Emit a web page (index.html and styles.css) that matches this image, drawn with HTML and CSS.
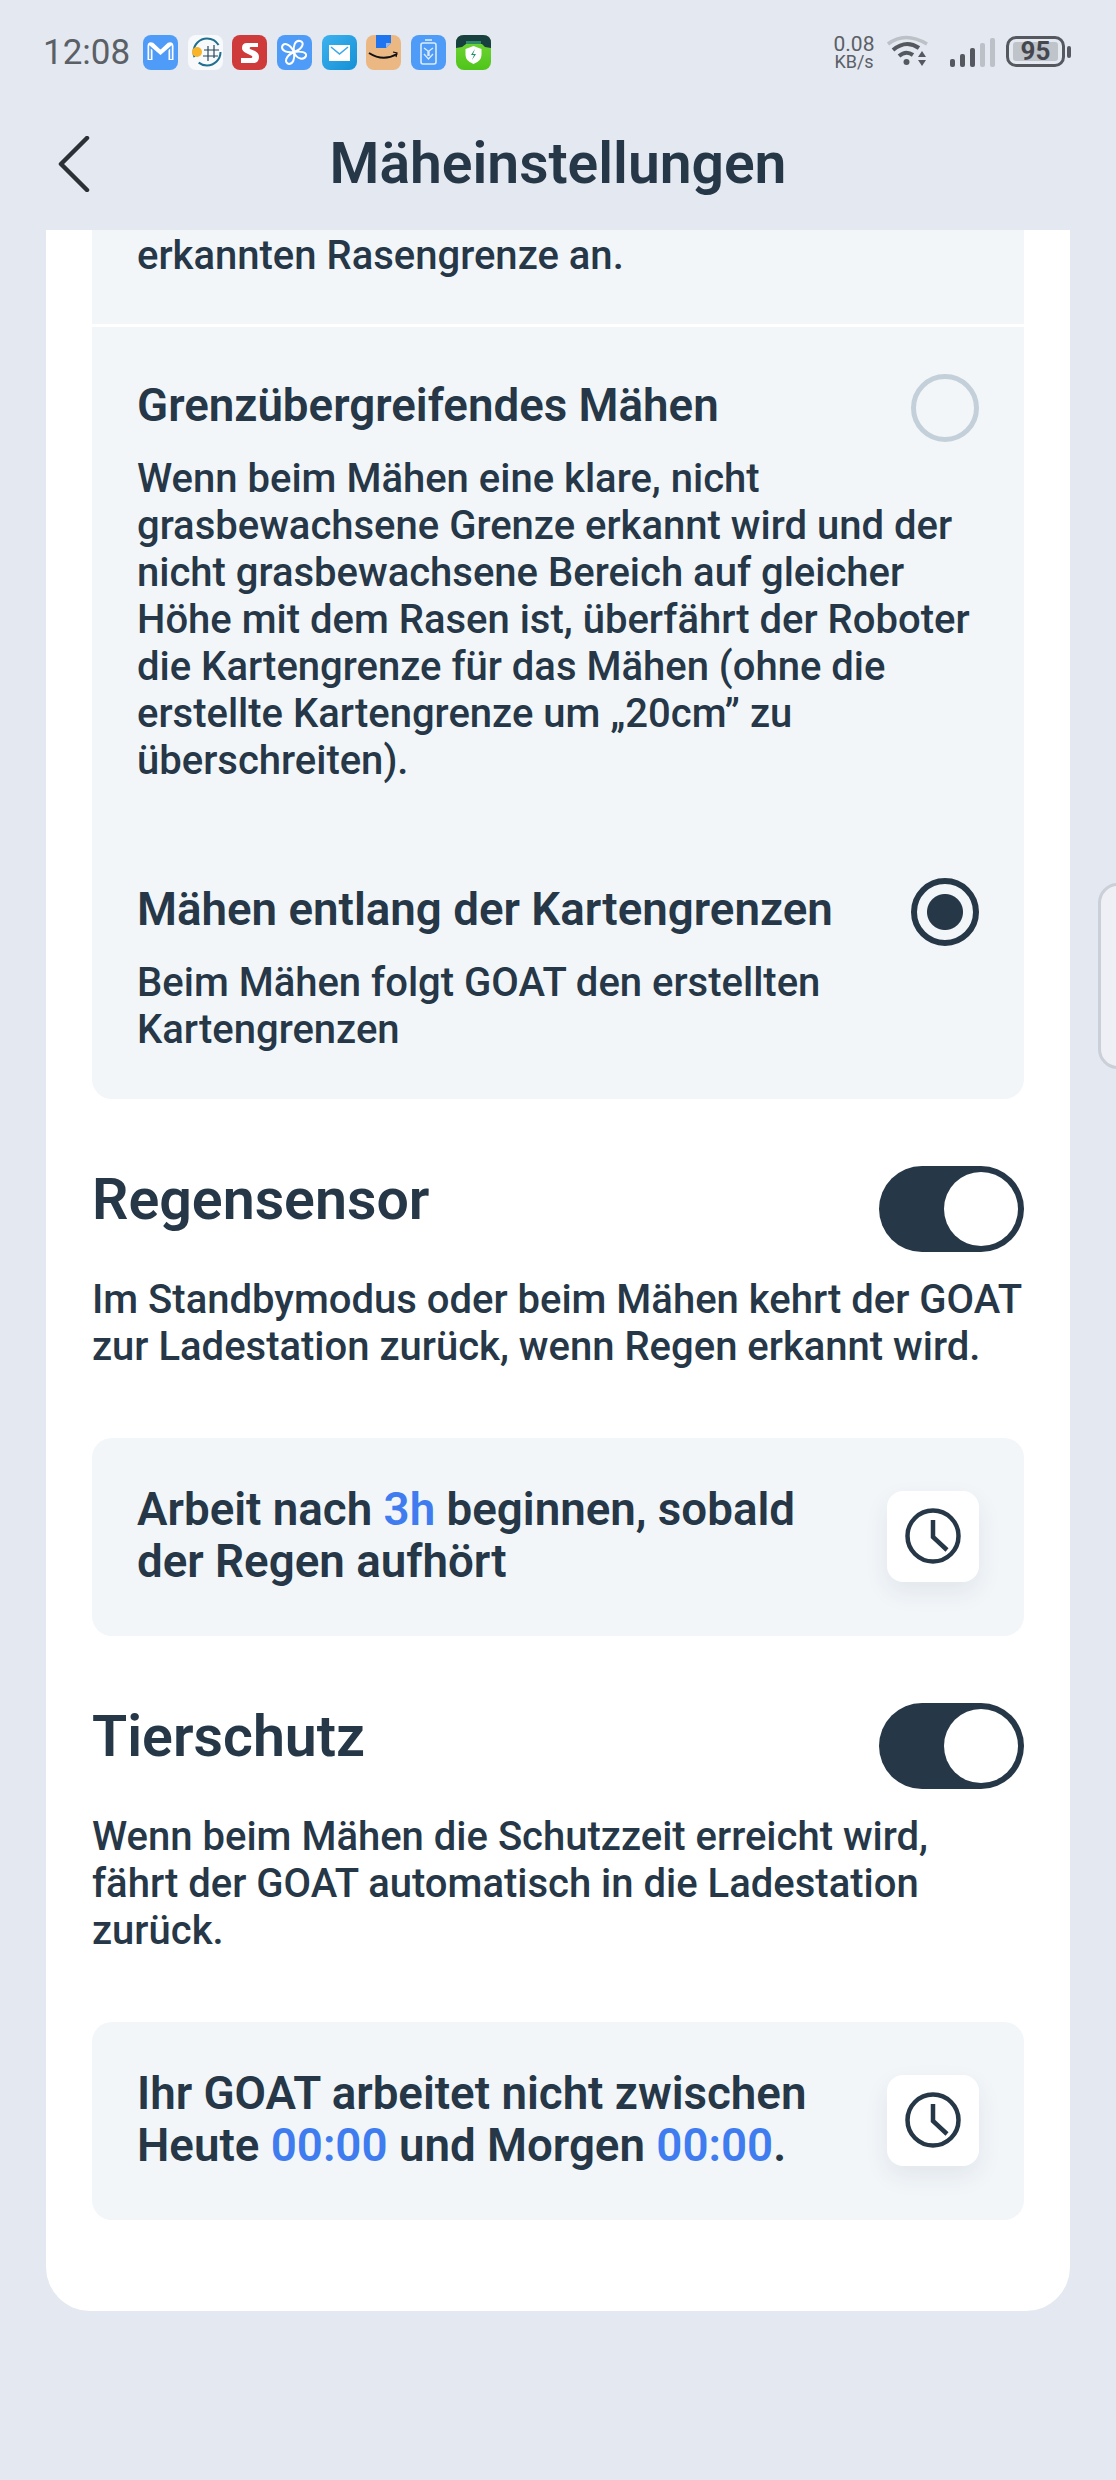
FILE: index.html
```html
<!DOCTYPE html>
<html lang="de">

<head>
    <meta charset="utf-8">
    <title>Mäheinstellungen</title>
    <link rel="stylesheet" href="styles.css">
</head>

<body>
    <div class="statusBar">
        <span class="time">12:08</span>
        <div class="appIcons">
            <svg viewBox="0 0 35 35"><rect width="35" height="35" rx="8" fill="#4e9bf8"/><path d="M7 25V11q0-2 2-1l8.500 8 8.500-8q2-1 2 1v14" fill="none" stroke="#fff" stroke-width="5" stroke-linejoin="round"/><path d="M7 24V12l10.500 9 10.500-9v12" fill="none" stroke="#4e9bf8" stroke-width="1.600"/></svg>
            <svg viewBox="0 0 35 35"><rect width="35" height="35" rx="8" fill="#f7f9fb"/><circle cx="19" cy="17" r="13.500" fill="none" stroke="#1f6f8f" stroke-width="2" stroke-dasharray="30 7 40 8"/><circle cx="9" cy="17" r="5" fill="#f8b52a"/><path d="M20 11v15M26 10v13M16 15h15M15 21h15" stroke="#28475a" stroke-width="1.200"/></svg>
            <svg viewBox="0 0 35 35"><rect width="35" height="35" rx="8" fill="#cf3a3a"/><path d="M26 8H15q-5 0-5 5 0 3 4 5l6 3q1 2-1 2H9v5h12q6 0 6-6 0-4-4-6l-5-2q-1-2 1-2h7z" fill="#fff"/></svg>
            <svg viewBox="0 0 35 35"><rect width="35" height="35" rx="8" fill="#4e9bf8"/><path d="M17 17C10 18 5 16 5 12c1-4 7-5 12 5zM17 17c-1-6 1-12 6-11 5 1 3 8-6 11zM17 17c7-1 13 0 12 4-2 4-9 4-12-4zM17 17c1 7-1 12-5 12-5-1-4-8 5-12z" fill="none" stroke="#fff" stroke-width="2"/></svg>
            <svg viewBox="0 0 35 35"><defs><linearGradient id="mailBg" x1="0" y1="0" x2="1" y2="1"><stop offset="0" stop-color="#3db2ee"/><stop offset="1" stop-color="#1590d6"/></linearGradient></defs><rect width="35" height="35" rx="8" fill="url(#mailBg)"/><rect x="7" y="10" width="21" height="16" fill="#fff"/><path d="M9 12l8.500 7 8.500-7" fill="none" stroke="#3aa9e6" stroke-width="1.600"/></svg>
            <svg viewBox="0 0 35 35"><rect width="35" height="35" rx="8" fill="#ebb884"/><path d="M10 0h15v8l-5 5H10z" fill="#1f74f0"/><path d="M20 8h5l-5 5z" fill="#8fb8f5"/><path d="M3 18q14 9 28 1" fill="none" stroke="#111" stroke-width="2"/><path d="M27 17l4 1-1 4" fill="none" stroke="#111" stroke-width="1.200"/></svg>
            <svg viewBox="0 0 35 35"><rect width="35" height="35" rx="8" fill="#4e9bf8"/><rect x="10" y="8" width="15" height="21" rx="2" fill="none" stroke="#d9ebff" stroke-width="1.600"/><path d="M14 5h7" stroke="#d9ebff" stroke-width="1.600"/><path d="M13 13l4 3v5M22 13l-4 3v5M13 19l4.500 5 4.500-5" fill="none" stroke="#d9ebff" stroke-width="1.400"/></svg>
            <svg viewBox="0 0 35 35"><defs><linearGradient id="greenBg" x1="0" y1="0" x2="0" y2="1"><stop offset="0" stop-color="#76d83a"/><stop offset="1" stop-color="#4fc41a"/></linearGradient></defs><rect width="35" height="35" rx="8" fill="url(#greenBg)"/><path d="M0 13V8q0-8 8-8h19q8 0 8 8v5l-6-1-3-3H10l-4 3z" fill="#17403f"/><path d="M10 6h15v3H10z" fill="#2f8a65"/><path d="M17.500 11l8 3v6q0 6-8 9-8-3-8-9v-6z" fill="#fff"/><path d="M19 14l-4 6h3l-2 5 4-6h-3z" fill="#1f8f6a"/></svg>
        </div>
        <div class="netSpeed">0.08<small>KB/s</small></div>
        <svg class="wifi" viewBox="0 0 43 33"><path d="M2 10Q19-3 41 10" fill="none" stroke="#bcc0c7" stroke-width="3.500"/><path d="M7 16Q20 5 33 14" fill="none" stroke="#55595f" stroke-width="4"/><path d="M13 22q7-6 14-1" fill="none" stroke="#55595f" stroke-width="4"/><circle cx="20.500" cy="28" r="3" fill="#55595f"/><path d="M32 23l4-6 4 6z" fill="#55595f"/><path d="M32 26l4 6 4-6z" fill="#55595f"/></svg>
        <div class="signal">
            <i class="barOn barA"></i><i class="barOn barB"></i><i class="barOn barC"></i><i class="barOff barD"></i><i class="barOff barE"></i>
        </div>
        <div class="battery"><span class="batteryFill">95</span></div>
        <i class="batteryNub"></i>
    </div>

    <div class="header">
        <svg class="back" viewBox="0 0 32 56"><path d="M29 2L3 28l26 26" fill="none" stroke="#2b3036" stroke-width="4.500" stroke-linecap="round" stroke-linejoin="round"/></svg>
        <h1>Mäheinstellungen</h1>
    </div>

    <div class="card">
        <div class="optionsPanel">
            <div class="optionCut">
                <p class="bodyText">erkannten Rasengrenze an.</p>
            </div>
            <div class="option">
                <div class="optionHead">
                    <h3>Grenzübergreifendes Mähen</h3>
                    <i class="radio"></i>
                </div>
                <p class="bodyText">Wenn beim Mähen eine klare, nicht grasbewachsene Grenze erkannt wird und der nicht grasbewachsene Bereich auf gleicher Höhe mit dem Rasen ist, überfährt der Roboter die Kartengrenze für das Mähen (ohne die erstellte Kartengrenze um „20cm” zu überschreiten).</p>
            </div>
            <div class="option optionLast">
                <div class="optionHead">
                    <h3>Mähen entlang der Kartengrenzen</h3>
                    <i class="radio radioOn"></i>
                </div>
                <p class="bodyText">Beim Mähen folgt GOAT den erstellten Kartengrenzen</p>
            </div>
        </div>

        <div class="sectionHead">
            <h2>Regensensor</h2>
            <div class="toggle"><i></i></div>
        </div>
        <p class="bodyText">Im Standbymodus oder beim Mähen kehrt der GOAT zur Ladestation zurück, wenn Regen erkannt wird.</p>
        <div class="timePanel">
            <p>Arbeit nach <span class="blue">3h</span> beginnen, sobald der Regen aufhört</p>
            <div class="clockTile">
                <svg viewBox="0 0 56 56"><circle cx="28" cy="28" r="25.500" fill="none" stroke="#263747" stroke-width="4.500"/><path d="M28 12v17l14 13" fill="none" stroke="#263747" stroke-width="4.500"/></svg>
            </div>
        </div>

        <div class="sectionHead">
            <h2>Tierschutz</h2>
            <div class="toggle"><i></i></div>
        </div>
        <p class="bodyText">Wenn beim Mähen die Schutzzeit erreicht wird, fährt der GOAT automatisch in die Ladestation zurück.</p>
        <div class="timePanel">
            <p>Ihr GOAT arbeitet nicht zwischen Heute <span class="blue">00:00</span> und Morgen <span class="blue">00:00</span>.</p>
            <div class="clockTile">
                <svg viewBox="0 0 56 56"><circle cx="28" cy="28" r="25.500" fill="none" stroke="#263747" stroke-width="4.500"/><path d="M28 12v17l14 13" fill="none" stroke="#263747" stroke-width="4.500"/></svg>
            </div>
        </div>
    </div>

    <div class="sideHandle"></div>
</body>

</html>
```

FILE: styles.css
```css
html,
body {
    margin: 0;
    height: 2480px;
    overflow: hidden;
}

body {
    position: relative;
    background: #e4e8f1;
    color: #263747;
    font-family: Roboto, "Liberation Sans", sans-serif;
}

h1,
h2,
h3,
p {
    margin: 0;
}

/* status bar */
.statusBar {
    display: flex;
    align-items: center;
    height: 104px;
    padding-left: 43px;
    color: #5b5f66;
}

.time {
    font-size: 35px;
    width: 100px;
}

.appIcons {
    display: flex;
    gap: 9.700px;
    width: 689px;
}

.appIcons svg {
    width: 35px;
    height: 35px;
}

.netSpeed {
    box-sizing: border-box;
    width: 54px;
    padding-right: 10px;
    font-size: 21px;
    line-height: 19px;
    text-align: center;
}

.netSpeed small {
    display: block;
    font-size: 18px;
    line-height: 15px;
}

.wifi {
    width: 43px;
    height: 33px;
    margin-top: -4px;
}

.signal {
    display: flex;
    align-items: flex-end;
    gap: 5px;
    height: 30px;
    margin-left: 21px;
    margin-top: -1px;
}

.signal i {
    width: 5px;
    border-radius: 2px;
}

.barOn {
    background: #55595f;
}

.barOff {
    background: #bcc0c7;
}

.barA { height: 8px; }
.barB { height: 13px; }
.barC { height: 19px; }
.barD { height: 24px; }
.barE { height: 29px; }

.battery {
    box-sizing: border-box;
    width: 59px;
    height: 31px;
    margin-left: 11px;
    margin-top: -1px;
    padding: 3px 4px;
    border: 3px solid #55595f;
    border-radius: 10px;
}

.batteryFill {
    display: block;
    height: 100%;
    background: #bfc3ca;
    border-radius: 3px;
    color: #44484e;
    font-size: 26px;
    font-weight: 700;
    line-height: 19px;
    text-align: center;
}

.batteryNub {
    width: 4px;
    height: 12px;
    margin-left: 2px;
    margin-top: -1px;
    background: #55595f;
    border-radius: 2px;
}

/* header */
.header {
    position: relative;
    display: flex;
    justify-content: center;
    align-items: center;
    height: 118px;
    margin-bottom: 8px;
}

.header h1 {
    padding-top: 2px;
    font-size: 57px;
    font-weight: 600;
    line-height: 116px;
}

.back {
    position: absolute;
    left: 58px;
    top: 32px;
    width: 32px;
    height: 56px;
}

/* white card */
.card {
    margin: 0 46px;
    padding: 0 46px 91px;
    background: #fff;
    border-radius: 0 0 44px 44px;
}

.bodyText {
    font-size: 40px;
    font-weight: 500;
    line-height: 47px;
}

.optionsPanel {
    background: #f2f6f9;
    border-radius: 0 0 20px 20px;
}

.optionCut {
    padding: 2px 45px 45px;
    border-bottom: 3px solid #fff;
}

.option {
    padding: 47px 45px 0;
}

.optionLast {
    padding-top: 94px;
    padding-bottom: 46px;
}

.optionHead {
    display: flex;
    justify-content: space-between;
    align-items: center;
    height: 68px;
    margin-bottom: 13px;
}

.optionHead h3 {
    padding-bottom: 4px;
    font-size: 45.700px;
    font-weight: 600;
    line-height: 56px;
}

.radio {
    box-sizing: border-box;
    flex: none;
    width: 68px;
    height: 68px;
    border: 5px solid #c3d0d9;
    border-radius: 50%;
}

.radioOn {
    border: 6px solid #263747;
    background: radial-gradient(circle, #263747 0 17.500px, transparent 18.500px);
}

.sectionHead {
    display: flex;
    justify-content: space-between;
    height: 86px;
    margin-top: 67px;
    margin-bottom: 24px;
}

.sectionHead h2 {
    font-size: 57.300px;
    font-weight: 600;
    line-height: 68px;
}

.toggle {
    display: flex;
    justify-content: flex-end;
    align-items: center;
    box-sizing: border-box;
    width: 145px;
    height: 86px;
    padding-right: 6px;
    background: #263747;
    border-radius: 43px;
}

.toggle i {
    width: 74px;
    height: 74px;
    background: #fff;
    border-radius: 50%;
}

.timePanel {
    display: flex;
    justify-content: space-between;
    align-items: center;
    margin-top: 68px;
    padding: 46px 45px 48px 45px;
    background: #f2f6f9;
    border-radius: 20px;
}

.timePanel p {
    width: 700px;
    font-size: 45.700px;
    font-weight: 600;
    line-height: 52px;
}

.blue {
    color: #3f7cf0;
}

.clockTile {
    display: flex;
    justify-content: center;
    align-items: center;
    flex: none;
    width: 92px;
    height: 91px;
    background: #fff;
    border-radius: 16px;
    box-shadow: 0 10px 24px rgba(38, 55, 71, 0.08);
}

.clockTile svg {
    width: 56px;
    height: 56px;
}

/* floating tab on the right edge */
.sideHandle {
    position: absolute;
    left: 1098px;
    top: 883px;
    width: 40px;
    height: 186px;
    box-sizing: border-box;
    background: #eef0f5;
    border: 3px solid #cbcfd7;
    border-radius: 20px;
}
```
